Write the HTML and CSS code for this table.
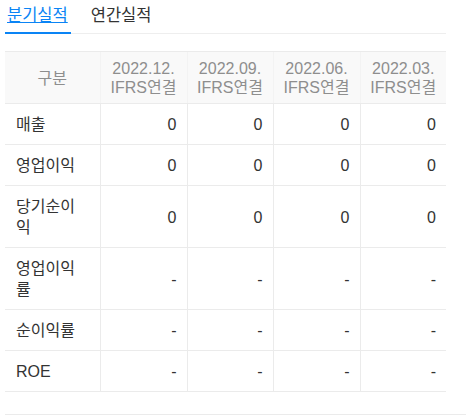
FILE: index.html
```html
<!DOCTYPE html>
<html lang="ko">
<head>
<meta charset="utf-8">
<link rel="stylesheet" href="styles.css">
</head>
<body>
<div class="wrap">
  <div class="tabs">
    <a class="tab active">분기실적</a>
    <a class="tab">연간실적</a>
  </div>
  <table class="perf">
    <colgroup>
      <col class="c-first"><col class="c-a"><col class="c-b"><col class="c-a"><col class="c-b">
    </colgroup>
    <thead>
      <tr>
        <th>구분</th>
        <th>2022.12.<br>IFRS연결</th>
        <th>2022.09.<br>IFRS연결</th>
        <th>2022.06.<br>IFRS연결</th>
        <th>2022.03.<br>IFRS연결</th>
      </tr>
    </thead>
    <tbody>
      <tr><td class="lbl">매출</td><td>0</td><td>0</td><td>0</td><td>0</td></tr>
      <tr><td class="lbl">영업이익</td><td>0</td><td>0</td><td>0</td><td>0</td></tr>
      <tr><td class="lbl">당기순이익</td><td>0</td><td>0</td><td>0</td><td>0</td></tr>
      <tr><td class="lbl">영업이익률</td><td>-</td><td>-</td><td>-</td><td>-</td></tr>
      <tr><td class="lbl">순이익률</td><td>-</td><td>-</td><td>-</td><td>-</td></tr>
      <tr><td class="lbl">ROE</td><td>-</td><td>-</td><td>-</td><td>-</td></tr>
    </tbody>
  </table>
  <div class="after"></div>
</div>
</body>
</html>
```
FILE: styles.css
```css
* { box-sizing: border-box; }
body {
  margin: 0;
  background: #fff;
  font-family: "Liberation Sans", "Noto Sans CJK KR", sans-serif;
  color: #333;
}
.wrap { padding: 0 0 0 5px; }
.tabs {
  display: flex;
  align-items: flex-start;
  width: 441px;
  border-bottom: 1px solid #eeeeee;
}
.tab {
  display: block;
  font-size: 16.5px;
  line-height: 22px;
  padding: 4px 3px 6px 2px;
  margin-right: 18px;
  margin-bottom: -1px;
  border-bottom: 2px solid transparent;
  color: #333;
  cursor: pointer;
}
.tab.active {
  color: #0a84f5;
  text-decoration: underline;
  border-bottom-color: #0a84f5;
}
.perf {
  margin-top: 17px;
  width: 441px;
  border-collapse: collapse;
  table-layout: fixed;
  font-size: 16px;
}
.c-first { width: 95px; }
.c-a { width: 87px; }
.c-b { width: 86px; }
.perf th {
  background: #f9f9f9;
  color: #8e8e8e;
  font-weight: normal;
  line-height: 19px;
  padding: 7px 2px 6px;
  text-align: center;
  border-top: 1px solid #ebebeb;
  border-bottom: 1px solid #ebebeb;
}
.perf td {
  line-height: 21px;
  padding: 10px 10px 9px;
  text-align: right;
  vertical-align: middle;
  border-bottom: 1px solid #ebebeb;
  border-left: 1px solid #ebebeb;
  color: #333;
}
.perf td.lbl {
  text-align: left;
  padding-left: 11px;
  padding-right: 12px;
  border-left: none;
}
.perf th + th { border-left: 1px solid #f3f3f3; }
.after {
  margin-top: 22px;
  height: 1px;
  background: #ebebeb;
}
```
